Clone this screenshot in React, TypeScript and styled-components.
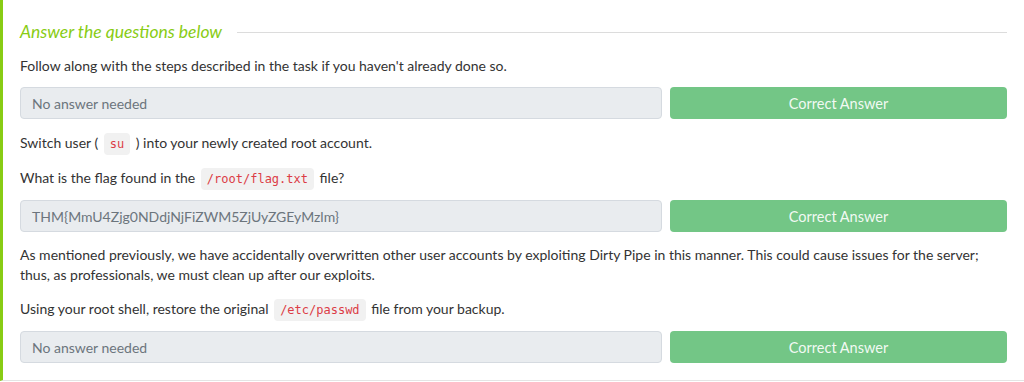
import styled, { createGlobalStyle } from 'styled-components'

const GlobalStyle = createGlobalStyle`
  html, body {
    margin: 0;
    padding: 0;
    background: #ffffff;
  }
  body {
    font-family: Lato, "Open Sans", sans-serif;
    color: #333333;
  }
`

const Panel = styled.section`
  border-left: 3px solid #88cc14;
  border-bottom: 1px solid #e4e4e4;
  padding: 20px 17px 17px 17px;
  display: flex;
  flex-direction: column;
  gap: 14px;
`

const PanelHeader = styled.div`
  display: flex;
  align-items: center;
  gap: 15px;
  height: 24px;
  margin-bottom: -2px;
`

const PanelTitle = styled.h3`
  margin: 0;
  font-size: 17.5px;
  font-weight: 400;
  font-style: italic;
  color: #88cc14;
  white-space: nowrap;
  line-height: 24px;
`

const Rule = styled.div`
  flex: 1;
  height: 1px;
  background: #dcdcdc;
`

const Question = styled.div`
  display: flex;
  flex-direction: column;
  gap: 11px;
`

const QuestionText = styled.p<{ $extra?: number }>`
  margin: 0;
  margin-top: ${(p) => p.$extra ?? 0}px;
  font-size: 14px;
  line-height: 20px;
  color: #333333;
`

const Code = styled.code`
  font-family: "DejaVu Sans Mono", "Liberation Mono", monospace;
  font-size: 12px;
  color: #dc3c46;
  background: #f1f1f1;
  border-radius: 4px;
  padding: 4px 6px;
  margin: 0 2px;
`

const AnswerRow = styled.div`
  display: grid;
  grid-template-columns: 642px 1fr;
  gap: 8px;
`

const AnswerInput = styled.div`
  height: 32px;
  box-sizing: border-box;
  border: 1px solid #d5dae0;
  border-radius: 4px;
  background: #e9ecef;
  color: #6c757d;
  font-size: 14px;
  padding: 0 11px;
  display: flex;
  align-items: center;
`

const CorrectButton = styled.button`
  height: 32px;
  border: none;
  border-radius: 4px;
  background: #73c686;
  color: rgba(255, 255, 255, 0.92);
  font-family: inherit;
  font-size: 14.5px;
  cursor: default;
`

const QUESTIONS = [
  { text: <>Follow along with the steps described in the task if you haven't already done so.</>, answer: 'No answer needed' },
  { text: <>Switch user ( <Code>su</Code> ) into your newly created root account.</> },
  { text: <>What is the flag found in the <Code>/root/flag.txt</Code> file?</>, answer: 'THM{MmU4Zjg0NDdjNjFiZWM5ZjUyZGEyMzlm}' },
  {
    text: (
      <>
        As mentioned previously, we have accidentally overwritten other user accounts by exploiting Dirty Pipe in this manner. This could cause issues for the server; thus, as professionals, we must clean up after our exploits.
      </>
    ),
    extra: -1,
  },
  { text: <>Using your root shell, restore the original <Code>/etc/passwd</Code> file from your backup.</>, answer: 'No answer needed' },
]

export default function App() {
  return (
    <>
      <GlobalStyle />
      <Panel>
        <PanelHeader>
          <PanelTitle>Answer the questions below</PanelTitle>
          <Rule />
        </PanelHeader>
        {QUESTIONS.map((q, i) => (
          <Question key={i}>
            <QuestionText $extra={q.extra}>{q.text}</QuestionText>
            {q.answer && (
              <AnswerRow>
                <AnswerInput>{q.answer}</AnswerInput>
                <CorrectButton>Correct Answer</CorrectButton>
              </AnswerRow>
            )}
          </Question>
        ))}
      </Panel>
    </>
  )
}
